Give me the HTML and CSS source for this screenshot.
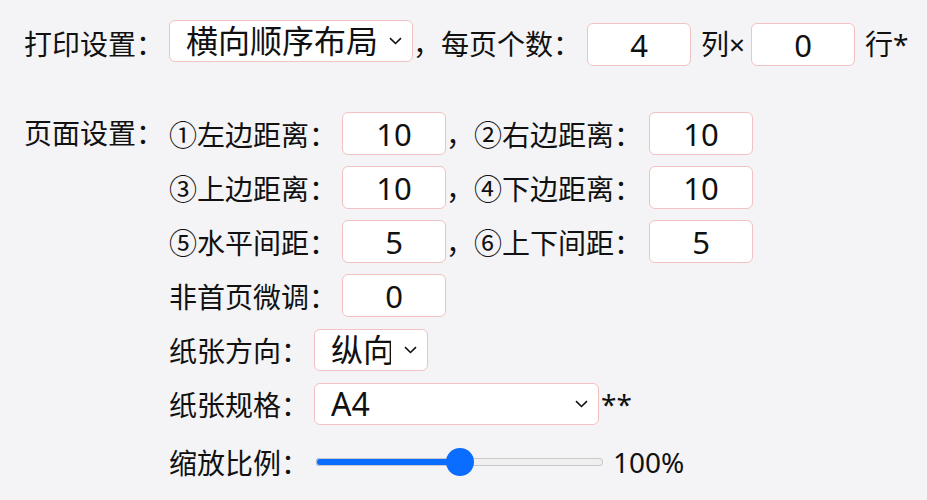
FILE: index.html
```html
<!DOCTYPE html>
<html lang="zh-CN">
<head>
    <meta charset="UTF-8">
    <meta name="viewport" content="width=device-width, initial-scale=1.0">
    <title>打印设置</title>
    <link rel="stylesheet" href="styles.css">
</head>
<body>
    <div class="sheet">
        <div class="row first">
            <span class="head">打印设置：</span>
            <select class="pick layout">
                <option>横向顺序布局</option>
                <option>纵向顺序布局</option>
            </select>
            <span>，每页个数：</span>
            <input type="text" class="num up" value="4">
            <span class="unit">列×</span>
            <input type="text" class="num up" value="0">
            <span class="unit">行*</span>
        </div>

        <div class="page">
            <span class="head">页面设置：</span>
            <div class="fields">
                <div class="row">
                    <span>①左边距离：</span>
                    <input type="text" class="num" value="10">
                    <span>，②右边距离：</span>
                    <input type="text" class="num right" value="10">
                </div>
                <div class="row">
                    <span>③上边距离：</span>
                    <input type="text" class="num" value="10">
                    <span>，④下边距离：</span>
                    <input type="text" class="num right" value="10">
                </div>
                <div class="row">
                    <span>⑤水平间距：</span>
                    <input type="text" class="num" value="5">
                    <span>，⑥上下间距：</span>
                    <input type="text" class="num right" value="5">
                </div>
                <div class="row">
                    <span>非首页微调：</span>
                    <input type="text" class="num" value="0">
                </div>
                <div class="row">
                    <span>纸张方向：</span>
                    <select class="pick orient">
                        <option>纵向</option>
                        <option>横向</option>
                    </select>
                </div>
                <div class="row">
                    <span>纸张规格：</span>
                    <select class="pick paper">
                        <option>A4</option>
                        <option>A5</option>
                        <option>B5</option>
                    </select>
                    <span class="mark">**</span>
                </div>
                <div class="row scale">
                    <span>缩放比例：</span>
                    <input type="range" class="zoom" min="0" max="200" value="100" style="--fill: 50%">
                    <span class="pct">100%</span>
                </div>
            </div>
        </div>
    </div>
</body>
</html>
```

FILE: styles.css
```css
body {
    margin: 0;
    background-color: #f4f4f6;
    color: #111;
    font-family: "Noto Sans", "Noto Sans CJK SC", sans-serif;
    font-size: 28px;
}

.sheet {
    padding: 19px 0 0 24px;
}

.row {
    display: flex;
    align-items: center;
    height: 43px;
    white-space: nowrap;
}

.first {
    height: 47px;
    margin-bottom: 46px;
}

.head {
    width: 145px;
}

.page {
    display: flex;
    align-items: flex-start;
}

.page .head {
    line-height: 43px;
}

.fields {
    display: flex;
    flex-direction: column;
    gap: 11px;
}

.num {
    box-sizing: border-box;
    width: 104px;
    height: 43px;
    margin: 0 0 0 5px;
    padding: 0;
    border: 1px solid #f1c2c2;
    border-radius: 6px;
    background: #fff;
    color: #111;
    font: 31px "Noto Sans", "Noto Sans CJK SC", sans-serif;
    text-align: center;
    outline: none;
}

.num.right {
    margin-left: 7px;
}

.first .num {
    margin: 4px 0 0 6px;
}

.first .unit {
    margin-left: 10px;
}

.first .num + .unit + .num {
    margin-left: 6px;
}

.pick {
    -webkit-appearance: none;
    appearance: none;
    box-sizing: border-box;
    height: 42px;
    margin: 0 0 0 5px;
    padding: 0 36px 0 16px;
    border: 1px solid #f1c2c2;
    border-radius: 6px;
    background: #fff url("data:image/svg+xml,%3Csvg xmlns='http://www.w3.org/2000/svg' width='13' height='8' viewBox='0 0 13 8'%3E%3Cpath d='M1 1.2l5.5 5.3 5.5-5.3' fill='none' stroke='%23111' stroke-width='1.6'/%3E%3C/svg%3E") no-repeat right 10px center;
    color: #111;
    font: 32px "Noto Sans", "Noto Sans CJK SC", sans-serif;
    line-height: 40px;
    outline: none;
}

.layout {
    width: 244px;
    margin: 0 0 4px 0;
}

.orient {
    width: 114px;
}

.paper {
    width: 285px;
}

.mark {
    margin-left: 2px;
}

.scale {
    margin-top: 4px;
}

.zoom {
    -webkit-appearance: none;
    appearance: none;
    width: 287px;
    height: 30px;
    margin: 0 0 0 7px;
    background: transparent;
}

.zoom::-webkit-slider-runnable-track {
    height: 8px;
    border-radius: 4px;
    background: linear-gradient(to right, #0a6dff var(--fill), #efefef var(--fill));
    box-shadow: inset 0 0 0 1px #c9c9c9;
}

.zoom::-webkit-slider-thumb {
    -webkit-appearance: none;
    width: 28px;
    height: 28px;
    margin-top: -10px;
    border: none;
    border-radius: 50%;
    background: #0a6dff;
}

.pct {
    margin-left: 10px;
}
```
